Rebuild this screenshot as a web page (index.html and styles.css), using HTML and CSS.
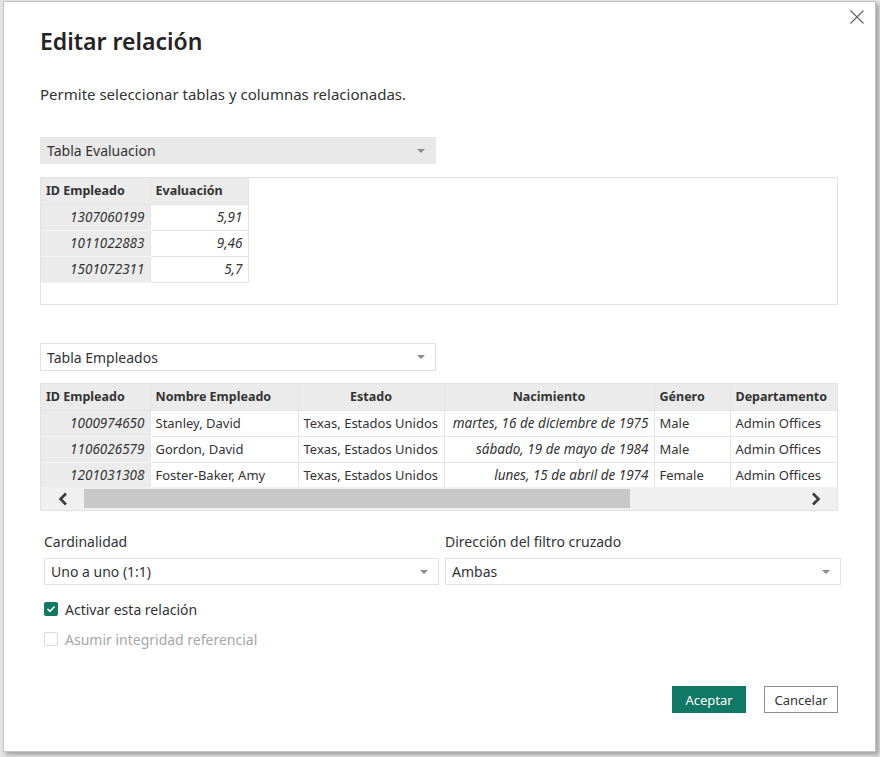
FILE: index.html
```html
<!DOCTYPE html>
<html lang="es">
<head>
<meta charset="utf-8">
<title>Editar relación</title>
<link rel="stylesheet" href="styles.css">
</head>
<body>
<div class="dialog">
  <button class="close" aria-label="Cerrar">
    <svg width="14" height="14" viewBox="0 0 14 14"><path d="M0.5 0.5L13.5 13.5M13.5 0.5L0.5 13.5" stroke="#666" stroke-width="1.2" fill="none"/></svg>
  </button>
  <h1 class="title">Editar relación</h1>
  <p class="subtitle">Permite seleccionar tablas y columnas relacionadas.</p>

  <div class="select select-grey">
    <span>Tabla Evaluacion</span>
    <svg class="caret" width="8" height="4" viewBox="0 0 8 4"><path d="M0 0H8L4 4Z" fill="#8a8a8a"/></svg>
  </div>
  <div class="grid-box">
    <table class="data data-1">
      <colgroup><col class="w-id"><col class="w-ev"></colgroup>
      <thead>
        <tr><th>ID Empleado</th><th>Evaluación</th></tr>
      </thead>
      <tbody>
        <tr><td class="key num">1307060199</td><td class="num">5,91</td></tr>
        <tr><td class="key num">1011022883</td><td class="num">9,46</td></tr>
        <tr><td class="key num">1501072311</td><td class="num">5,7</td></tr>
      </tbody>
    </table>
  </div>

  <div class="select select-white">
    <span>Tabla Empleados</span>
    <svg class="caret" width="8" height="4" viewBox="0 0 8 4"><path d="M0 0H8L4 4Z" fill="#8a8a8a"/></svg>
  </div>
  <div class="grid-box grid-box-2">
    <div class="scroll-area">
      <table class="data data-2">
        <colgroup>
          <col class="w-id"><col class="w-nombre"><col class="w-estado"><col class="w-nac"><col class="w-gen"><col class="w-dep">
        </colgroup>
        <thead>
          <tr>
            <th>ID Empleado</th>
            <th>Nombre Empleado</th>
            <th class="center">Estado</th>
            <th class="center">Nacimiento</th>
            <th>Género</th>
            <th>Departamento</th>
          </tr>
        </thead>
        <tbody>
          <tr><td class="key num">1000974650</td><td>Stanley, David</td><td>Texas, Estados Unidos</td><td class="num">martes, 16 de diciembre de 1975</td><td>Male</td><td>Admin Offices</td></tr>
          <tr><td class="key num">1106026579</td><td>Gordon, David</td><td>Texas, Estados Unidos</td><td class="num">sábado, 19 de mayo de 1984</td><td>Male</td><td>Admin Offices</td></tr>
          <tr><td class="key num">1201031308</td><td>Foster-Baker, Amy</td><td>Texas, Estados Unidos</td><td class="num">lunes, 15 de abril de 1974</td><td>Female</td><td>Admin Offices</td></tr>
        </tbody>
      </table>
    </div>
    <div class="hscroll">
      <span class="arrow">
        <svg width="10" height="14" viewBox="0 0 10 14"><path d="M8 1.5L2.5 7L8 12.5" stroke="#3c3c3c" stroke-width="2.6" fill="none"/></svg>
      </span>
      <div class="track"><div class="thumb"></div></div>
      <span class="arrow">
        <svg width="10" height="14" viewBox="0 0 10 14"><path d="M2 1.5L7.5 7L2 12.5" stroke="#3c3c3c" stroke-width="2.6" fill="none"/></svg>
      </span>
    </div>
  </div>

  <div class="settings">
    <div class="field">
      <label class="field-label">Cardinalidad</label>
      <div class="select select-white select-field">
        <span>Uno a uno (1:1)</span>
        <svg class="caret" width="8" height="4" viewBox="0 0 8 4"><path d="M0 0H8L4 4Z" fill="#8a8a8a"/></svg>
      </div>
    </div>
    <div class="field">
      <label class="field-label">Dirección del filtro cruzado</label>
      <div class="select select-white select-field">
        <span>Ambas</span>
        <svg class="caret" width="8" height="4" viewBox="0 0 8 4"><path d="M0 0H8L4 4Z" fill="#8a8a8a"/></svg>
      </div>
    </div>
  </div>

  <div class="checks">
    <div class="check-row">
      <span class="box box-on">
        <svg width="10" height="8" viewBox="0 0 10 8"><path d="M1.5 4L4 6.3L8.5 1.5" stroke="#fff" stroke-width="1.6" fill="none"/></svg>
      </span>
      <span class="check-label">Activar esta relación</span>
    </div>
    <div class="check-row disabled">
      <span class="box box-off"></span>
      <span class="check-label">Asumir integridad referencial</span>
    </div>
  </div>

  <div class="actions">
    <button class="btn btn-primary">Aceptar</button>
    <button class="btn btn-secondary">Cancelar</button>
  </div>
</div>
</body>
</html>
```

FILE: styles.css
```css
* { box-sizing: border-box; }

html, body {
  margin: 0;
  padding: 0;
}

body {
  width: 880px;
  height: 757px;
  background: #e4e4e4;
  font-family: "Noto Sans", "Open Sans", sans-serif;
  color: #252423;
  overflow: hidden;
}

.dialog {
  position: relative;
  margin: 1px 0 0 3px;
  width: 873px;
  height: 751px;
  background: #ffffff;
  border: 1px solid #c4c4c4;
  box-shadow: 3px 3px 4px rgba(0, 0, 0, 0.28);
  padding: 22px 37px 0 36px;
  display: flex;
  flex-direction: column;
}

.close {
  position: absolute;
  top: 8px;
  right: 11px;
  width: 14px;
  height: 14px;
  padding: 0;
  border: 0;
  background: none;
  display: flex;
}

.title {
  margin: 0;
  font-size: 23px;
  line-height: 34px;
  font-weight: 600;
  color: #252423;
}

.subtitle {
  margin: 26px 0 0 0;
  font-size: 15px;
  line-height: 20px;
  color: #333;
}

.select {
  width: 396px;
  height: 27px;
  display: flex;
  align-items: center;
  justify-content: space-between;
  padding: 0 10px 0 6px;
  font-size: 14px;
  color: #333;
}

.select-grey {
  margin-top: 33px;
  background: #e8e8e8;
  border: 1px solid #e8e8e8;
}

.select-white {
  margin-top: 38px;
  height: 28px;
  background: #fff;
  border: 1px solid #e2e2e2;
}

.caret { flex: none; }

.grid-box {
  margin-top: 13px;
  width: 798px;
  height: 128px;
  border: 1px solid #e2e2e2;
  background: #fff;
}

.grid-box-2 {
  margin-top: 12px;
  display: flex;
  flex-direction: column;
}

.scroll-area {
  flex: 1;
  overflow: hidden;
}

.data {
  border-collapse: collapse;
  table-layout: fixed;
  font-size: 13px;
  color: #333;
}

.data-1 { width: 207px; }
.data-2 { width: 809px; }

.w-id { width: 109px; }
.w-ev { width: 98px; }
.w-nombre { width: 148px; }
.w-estado { width: 146px; }
.w-nac { width: 210px; }
.w-gen { width: 76px; }
.w-dep { width: 122px; }

.data th,
.data td {
  height: 26px;
  padding: 0 5px;
  border: 1px solid #e4e4e4;
  white-space: nowrap;
  overflow: hidden;
  text-align: left;
}

.data tr:first-child th { border-top: 0; }
.data th:first-child,
.data td:first-child { border-left: 0; }

.data th {
  background: #ebebeb;
  font-weight: 700;
  font-size: 12.5px;
  color: #333;
}

.data th.center { text-align: center; }

.data td.key {
  background: #ebebeb;
  border-color: #f4f4f4 #e4e4e4;
}

.data td.num {
  text-align: right;
  font-style: italic;
  font-size: 13.5px;
}

.hscroll {
  height: 23px;
  background: #f0f0f0;
  display: flex;
  align-items: center;
}

.arrow {
  width: 43px;
  height: 23px;
  display: flex;
  align-items: center;
  justify-content: center;
  flex: none;
}

.track {
  flex: 1;
  height: 19px;
}

.thumb {
  width: 546px;
  height: 19px;
  background: #c8c8c8;
}

.settings {
  margin: 21px -3px 0 4px;
  display: grid;
  grid-template-columns: 395px 396px;
  column-gap: 6px;
}

.field {
  display: flex;
  flex-direction: column;
}

.field-label {
  font-size: 14px;
  line-height: 20px;
  color: #333;
}

.select-field {
  width: auto;
  margin-top: 6px;
  height: 27px;
  padding-left: 6px;
  font-size: 14px;
}

.checks {
  margin: 15px 0 0 4px;
  display: flex;
  flex-direction: column;
  gap: 12px;
}

.check-row {
  display: flex;
  align-items: center;
  gap: 7px;
  height: 18px;
  font-size: 14px;
  color: #333;
}

.check-row.disabled { color: #a6a6a6; }

.box {
  width: 14px;
  height: 14px;
  border-radius: 2px;
  display: flex;
  align-items: center;
  justify-content: center;
  flex: none;
}

.box-on { background: #117865; }
.box-off { border: 1px solid #dcdcdc; background: #fff; }

.actions {
  margin-top: 38px;
  display: flex;
  justify-content: flex-end;
  gap: 18px;
  width: 798px;
}

.btn {
  width: 74px;
  height: 27px;
  font-family: inherit;
  font-size: 13px;
  padding: 0;
}

.btn-primary {
  background: #117865;
  border: 0;
  color: #fff;
}

.btn-secondary {
  background: #fff;
  border: 1px solid #8f8f8f;
  color: #333;
}
```
